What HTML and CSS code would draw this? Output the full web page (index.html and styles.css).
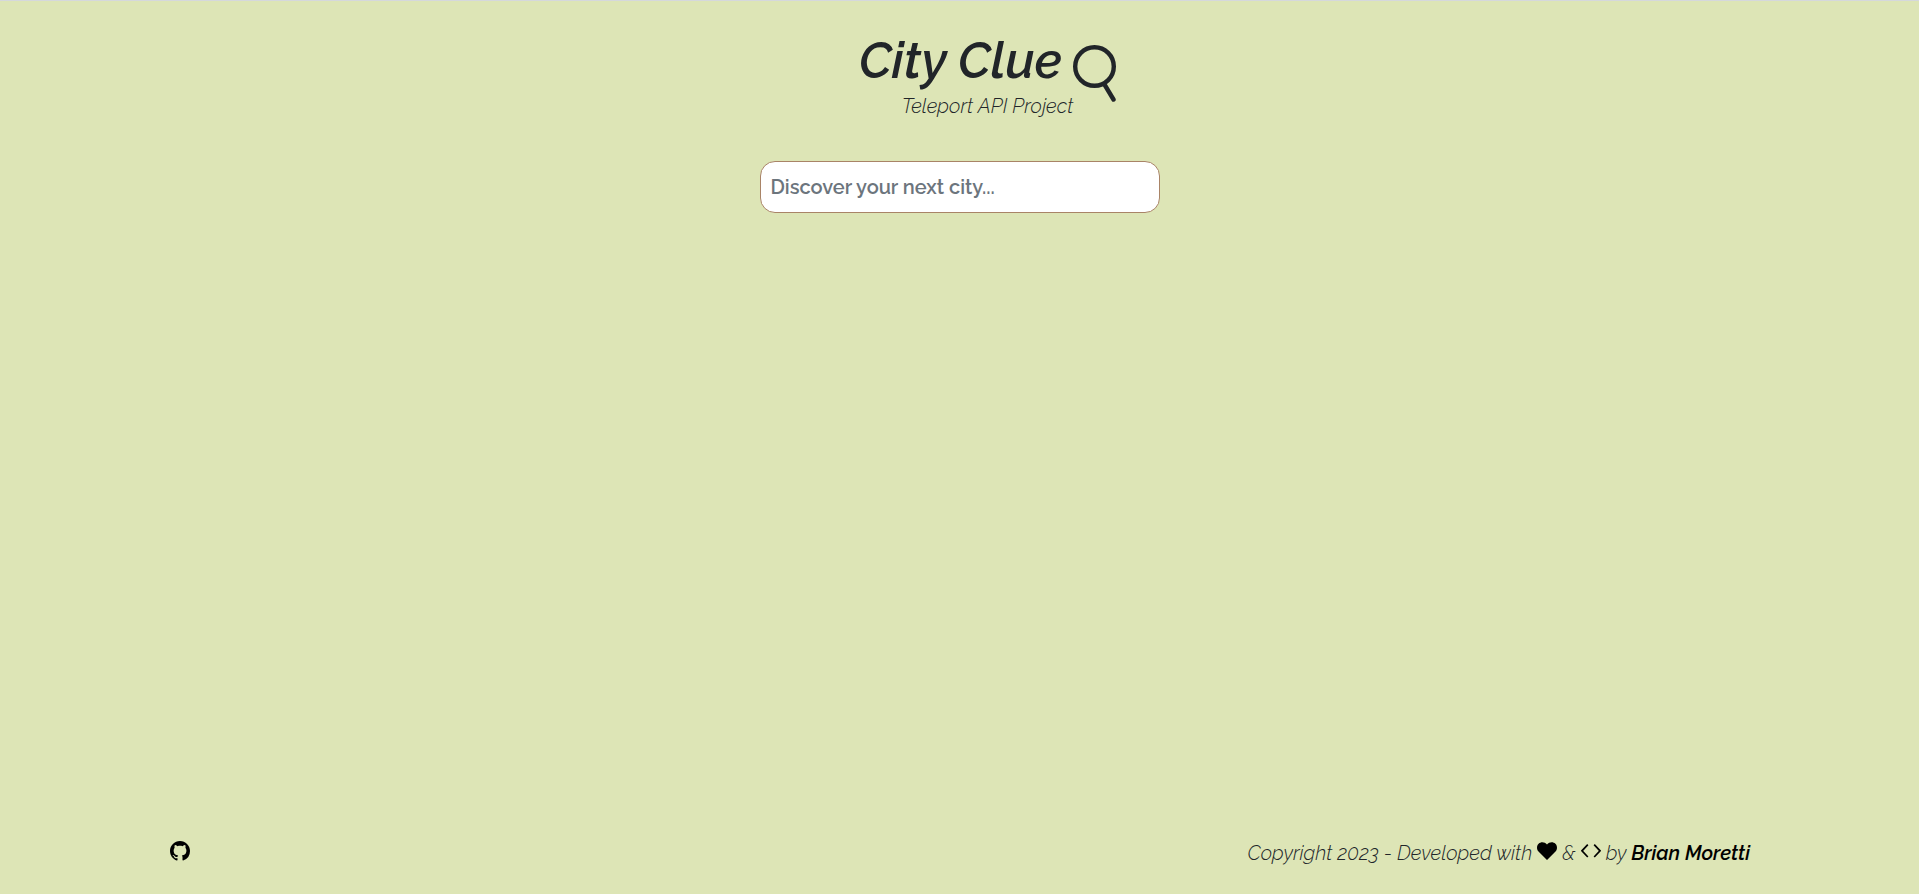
FILE: index.html
```html
<!DOCTYPE html>
<html lang="en">
<head>
<meta charset="utf-8">
<meta name="viewport" content="width=device-width, initial-scale=1">
<title>City Clue</title>
<link rel="stylesheet" href="styles.css">
</head>
<body class="page">
<header class="header">
  <div class="brand">
    <h1 class="title">City Clue</h1>
    <svg class="lens" viewBox="0 0 43 57" aria-hidden="true">
      <circle cx="21.5" cy="21.5" r="19.3"/>
      <path d="M31.5 39.5 40.5 54.5"/>
    </svg>
  </div>
  <p class="subtitle">Teleport API Project</p>
</header>
<main class="main">
  <input class="search" type="text" aria-label="City" placeholder="Discover your next city...">
</main>
<footer class="footer">
  <a class="link" href="#github" aria-label="GitHub">
    <svg class="icon" viewBox="0 0 16 16" aria-hidden="true"><path d="M8 0C3.58 0 0 3.58 0 8c0 3.54 2.29 6.53 5.47 7.59.4.07.55-.17.55-.38 0-.19-.01-.82-.01-1.49-2.01.37-2.53-.49-2.69-.94-.09-.23-.48-.94-.82-1.13-.28-.15-.68-.52-.01-.53.63-.01 1.08.58 1.23.82.72 1.21 1.87.87 2.33.66.07-.52.28-.87.51-1.07-1.78-.2-3.64-.89-3.64-3.95 0-.87.31-1.59.82-2.15-.08-.2-.36-1.02.08-2.12 0 0 .67-.21 2.2.82.64-.18 1.32-.27 2-.27s1.36.09 2 .27c1.53-1.04 2.2-.82 2.2-.82.44 1.1.16 1.92.08 2.12.51.56.82 1.27.82 2.15 0 3.07-1.87 3.75-3.65 3.95.29.25.54.73.54 1.48 0 1.07-.01 1.93-.01 2.2 0 .21.15.46.55.38A8.01 8.01 0 0 0 16 8c0-4.42-3.58-8-8-8"/></svg>
  </a>
  <p class="credit">Copyright 2023 - Developed with
    <svg class="icon" viewBox="0 0 20 20" role="img" aria-label="love"><path d="M10 19 1.500 10.500C-.5 8.300-.5 4.800 1.600 2.800 3.900.6 7.700.8 10 3.600 12.300.8 16.100.6 18.400 2.800c2.100 2 2.100 5.500.1 7.700z"/></svg>
    &amp;
    <svg class="icon icon-line" viewBox="0 0 20 20" role="img" aria-label="code"><path d="M6.800 3.600 1 9.800 6.800 16M13.200 3.600 19 9.800 13.200 16"/></svg>
    by <a class="link author" href="#author">Brian Moretti</a></p>
</footer>
</body>
</html>
```
FILE: styles.css
```css
* {
  box-sizing: border-box;
}

.page {
  display: flex;
  flex-direction: column;
  min-height: 100vh;
  margin: 0;
  border-top: 1px solid #d5d8dc;
  background: #dde5b6;
  color: #212529;
  font: 300 20px/30px Raleway, Lato, sans-serif;
}

.header {
  display: flex;
  flex-direction: column;
  align-items: center;
  padding: 30px 0 0 56px;
  font-style: italic;
}

.brand {
  display: flex;
  gap: 11px;
}

.title {
  margin: 0;
  font-size: 50px;
  line-height: 60px;
  font-weight: 600;
}

.lens {
  width: 43px;
  height: 57px;
  margin-top: 14px;
  margin-bottom: -11px;
  fill: none;
  stroke: #212529;
  stroke-width: 4.4;
  stroke-linecap: round;
}

.subtitle {
  margin: 0;
}

.main {
  flex: 1;
  display: flex;
  justify-content: center;
  align-items: flex-start;
  padding: 40px 16px;
}

.search {
  width: 400px;
  max-width: 100%;
  height: 52px;
  padding: 0 10px;
  border: 1px solid #a98467;
  border-radius: 15px;
  background: #fff;
  color: #212529;
  font: inherit;
  font-weight: 600;
}

.search::placeholder {
  color: #6c757d;
  opacity: 1;
}

.footer {
  display: flex;
  justify-content: space-between;
  align-items: center;
  padding: 0 169px 26px 170px;
}

.link {
  color: #000;
  text-decoration: none;
}

.credit {
  margin: 0;
  font-style: italic;
}

.author {
  font-weight: 600;
}

.icon {
  width: 20px;
  height: 20px;
  vertical-align: -1px;
  fill: #000;
}

.icon-line {
  fill: none;
  stroke: #000;
  stroke-width: 1.7;
}
```
